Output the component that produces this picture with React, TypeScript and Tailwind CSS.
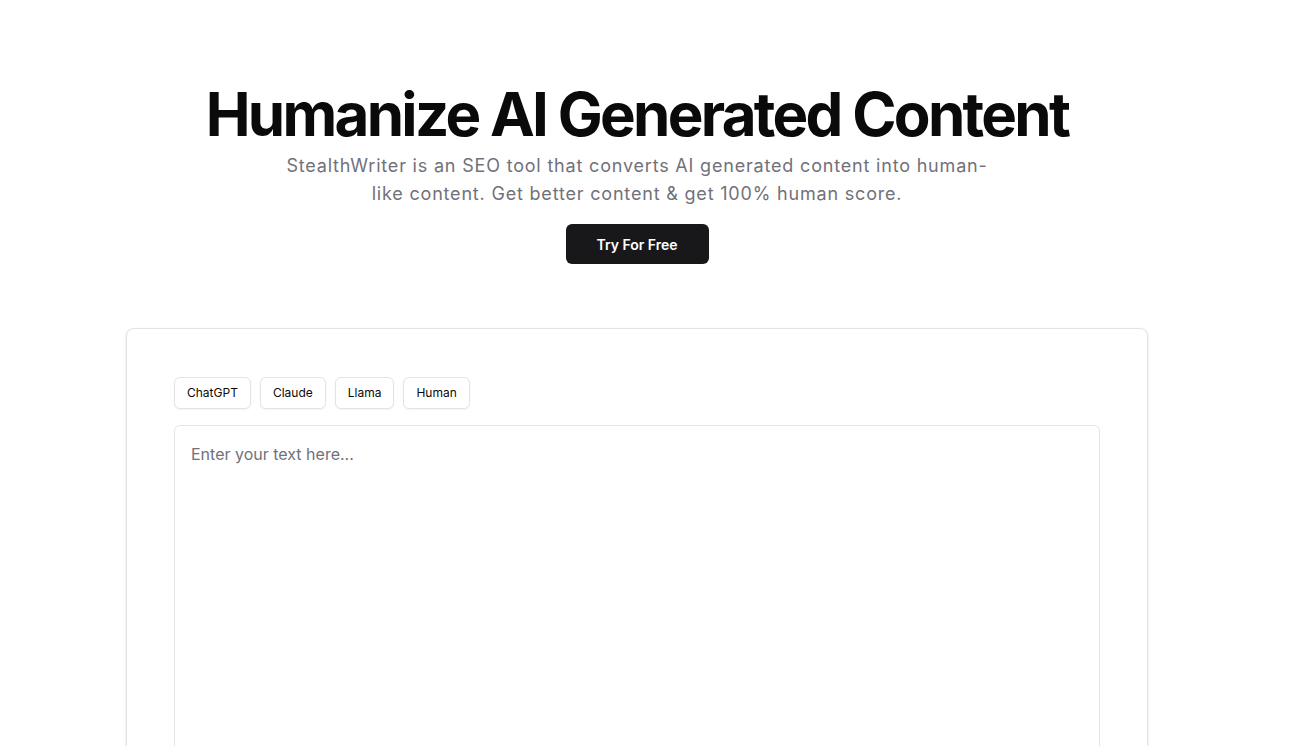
export default function App() {
  const models = ["ChatGPT", "Claude", "Llama", "Human"];

  return (
    <div className="min-h-screen bg-white" style={{ fontFamily: "Inter, 'Liberation Sans', sans-serif" }}>
      <div className="flex w-[1274px] flex-col items-center pt-[78px]">
        <h1 className="text-[60px] font-bold leading-[72px] tracking-[-0.045em] text-[#0a0a0a]">
          Humanize AI Generated Content
        </h1>
        <p className="mt-[2px] text-center text-[18px] leading-[28px] tracking-[0.045em] text-[#71717a]">
          StealthWriter is an SEO tool that converts AI generated content into human-
          <br />
          like content. Get better content &amp; get 100% human score.
        </p>
        <button className="mt-[16px] h-[40px] w-[143px] rounded-md bg-[#18181b] text-[14px] font-semibold text-white">
          Try For Free
        </button>

        <div className="mt-[64px] w-[1022px] rounded-lg border border-[#e4e4e7] bg-white px-[47px] pt-[48px] shadow-sm">
          <div className="flex gap-[9px]">
            {models.map((m) => (
              <button
                key={m}
                className="h-[32px] rounded-md border border-[#e4e4e7] bg-white px-[12px] text-[12px] font-normal text-[#0a0a0a] shadow-xs"
              >
                {m}
              </button>
            ))}
          </div>
          <textarea
            placeholder="Enter your text here..."
            className="mt-[16px] block h-[400px] w-full resize-none rounded-md border border-[#e4e4e7] px-[16px] py-[16px] text-[16px] leading-[24px] text-[#0a0a0a] outline-none placeholder:text-[#71717a]"
          />
        </div>
      </div>
    </div>
  );
}
